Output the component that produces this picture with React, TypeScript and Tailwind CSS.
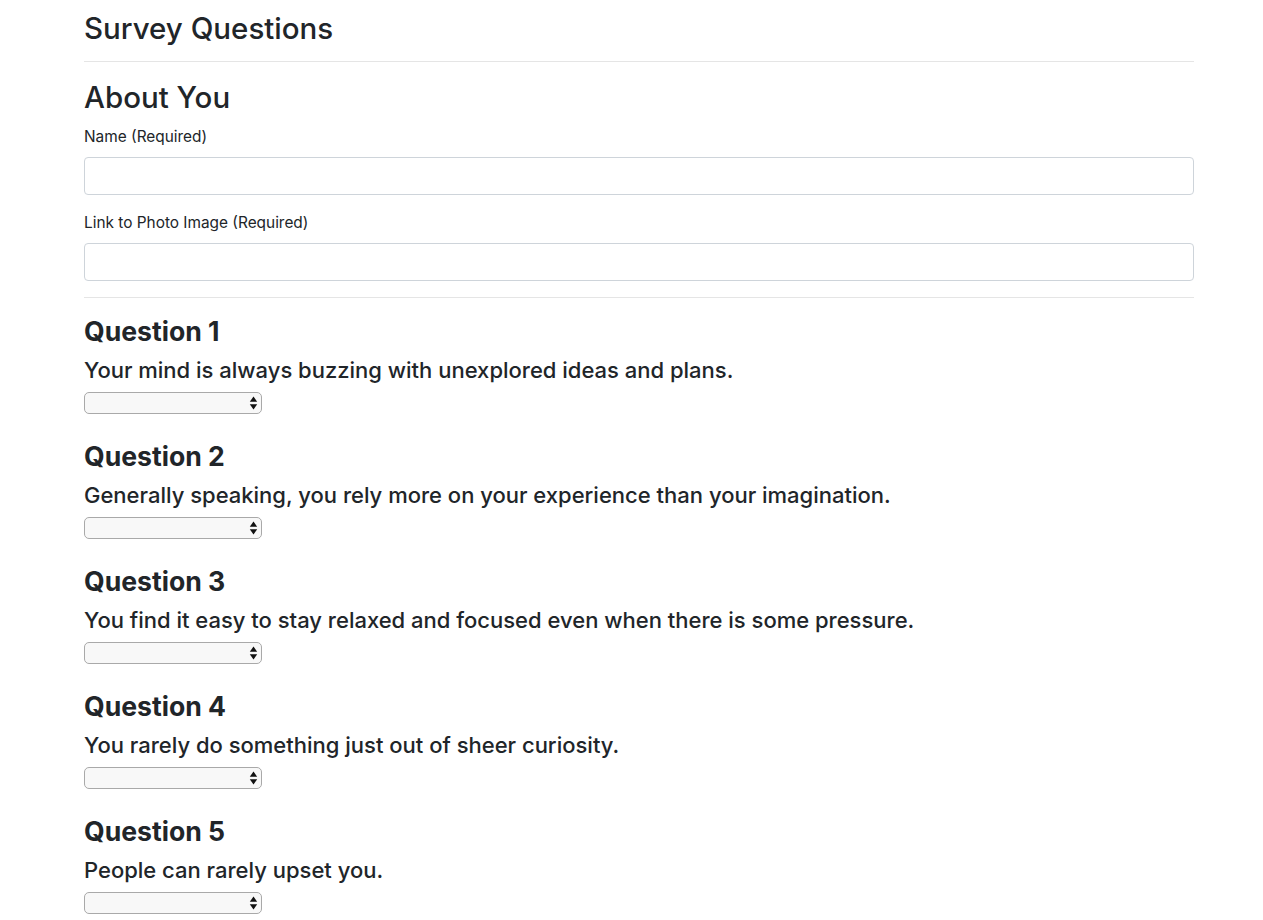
const questions = [
  "Your mind is always buzzing with unexplored ideas and plans.",
  "Generally speaking, you rely more on your experience than your imagination.",
  "You find it easy to stay relaxed and focused even when there is some pressure.",
  "You rarely do something just out of sheer curiosity.",
  "People can rarely upset you.",
];

function Select() {
  return (
    <div className="relative w-[178px] h-[22px]">
      <select className="block appearance-none w-full h-full rounded-[5px] border border-[#a9a9a9] bg-[#f8f8f8] text-[13px] outline-none" />
      <svg
        className="pointer-events-none absolute right-[4px] top-[4px]"
        width="9"
        height="14"
        viewBox="0 0 9 14"
      >
        <path d="M4.5 0.5 L8.2 5.8 L0.8 5.8 Z" fill="#111" />
        <path d="M4.5 13.5 L8.2 8.2 L0.8 8.2 Z" fill="#111" />
      </svg>
    </div>
  );
}

export default function App() {
  return (
    <div
      className="min-h-screen bg-white text-[#212529]"
      style={{ fontFamily: "Inter, 'Noto Sans', sans-serif" }}
    >
      <div className="ml-[84px] w-[1110px] pt-[9px]">
        <h2 className="text-[29.5px] leading-[38.4px] font-medium mb-[8px]">Survey Questions</h2>
        <hr className="mt-[14px] mb-[16px] border-0 border-t border-black/10" />

        <h2 className="text-[29.5px] leading-[38.4px] font-medium mb-[8px]">About You</h2>
        <div className="mb-[16px]">
          <label className="block text-[15.4px] leading-[24px] mb-[8px]">Name (Required)</label>
          <input className="block w-full h-[38px] rounded-[4px] border border-[#ced4da] px-3 outline-none" />
        </div>
        <div className="mb-[16px]">
          <label className="block text-[15.4px] leading-[24px] mb-[8px]">
            Link to Photo Image (Required)
          </label>
          <input className="block w-full h-[38px] rounded-[4px] border border-[#ced4da] px-3 outline-none" />
        </div>
        <hr className="mb-[17px] border-0 border-t border-black/10" />

        {questions.map((q, i) => (
          <div key={i} className="mb-[25.6px]">
            <h3 className="text-[26.6px] leading-[33.6px] font-bold mb-[8px]">Question {i + 1}</h3>
            <h4 className="text-[22px] leading-[28.8px] font-medium mb-[7px]">{q}</h4>
            <Select />
          </div>
        ))}
      </div>
    </div>
  );
}
